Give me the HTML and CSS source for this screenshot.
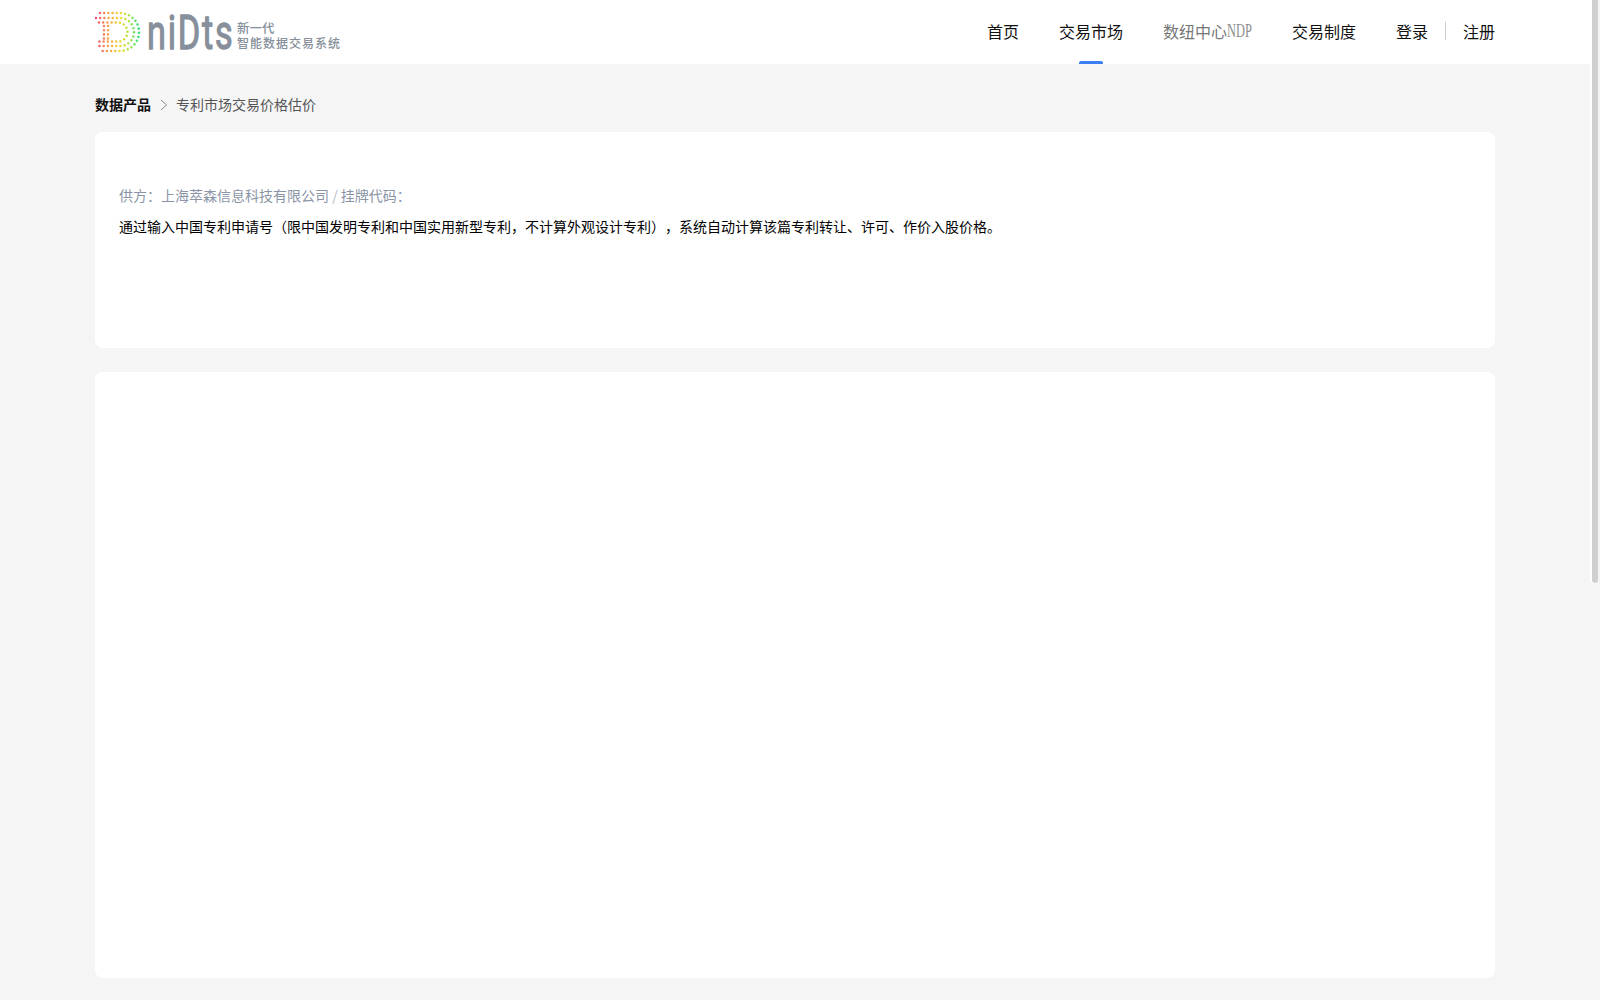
FILE: index.html
```html
<!DOCTYPE html>
<html lang="zh-CN">
<head>
<meta charset="utf-8">
<title>专利市场交易价格估价</title>
<link rel="stylesheet" href="styles.css">
</head>
<body>
<div class="viewport">
  <header class="header">
    <div class="header-inner">
      <svg class="logo" viewBox="95 0 250 64" width="250" height="64" role="img" aria-label="niDts 新一代智能数据交易系统">
        <defs>
          <linearGradient id="dg" gradientUnits="userSpaceOnUse" x1="95" y1="0" x2="140" y2="0">
            <stop offset="0" stop-color="#f4427c"/>
            <stop offset="0.28" stop-color="#f8a04c"/>
            <stop offset="0.55" stop-color="#f0dc3c"/>
            <stop offset="0.75" stop-color="#b4e444"/>
            <stop offset="0.95" stop-color="#3ee27c"/>
          </linearGradient>
        </defs>
        <g class="logo-dots" stroke="url(#dg)">
          <path d="M100 13H120A19 19 0 0 1 120 51H100"/>
          <path d="M96 18H120A14 14 0 0 1 120 46H96"/>
          <path d="M99 22.500H118A9.500 9.500 0 0 1 118 41.500H99"/>
          <path d="M104 26V40"/>
          <path d="M108 26V40"/>
        </g>
        <text class="logo-word" transform="translate(147 49) scale(0.7 1)">niDts</text>
        <text class="logo-cn logo-cn-top" x="237" y="33">新一代</text>
        <text class="logo-cn" x="237" y="48" textLength="103">智能数据交易系统</text>
      </svg>
      <nav class="nav">
        <a class="nav-item">首页</a>
        <a class="nav-item active">交易市场</a>
        <a class="nav-item muted">数纽中心<span class="ndp">NDP</span></a>
        <a class="nav-item">交易制度</a>
        <div class="auth">
          <a class="nav-item">登录</a>
          <span class="auth-sep"></span>
          <a class="nav-item">注册</a>
        </div>
      </nav>
    </div>
  </header>
  <main class="main">
    <div class="crumbs">
      <span class="crumb-root">数据产品</span>
      <svg class="crumb-sep" viewBox="0 0 10 12" width="10" height="12"><path d="M2 1L7.500 6L2 11"/></svg>
      <span class="crumb-current">专利市场交易价格估价</span>
    </div>
    <section class="card card-info">
      <p class="supplier">供方：上海萃森信息科技有限公司 <span class="slash">/</span> 挂牌代码：</p>
      <p class="desc">通过输入中国专利申请号（限中国发明专利和中国实用新型专利，不计算外观设计专利），系统自动计算该篇专利转让、许可、作价入股价格。</p>
    </section>
    <section class="card card-body"></section>
  </main>
  <div class="scroll-thumb"></div>
</div>
</body>
</html>
```
FILE: styles.css
```css
* { box-sizing: border-box; }
html, body { margin: 0; padding: 0; height: 100%; overflow: hidden; }
body {
  background: #f5f5f5;
  color: #000;
  font-family: "Noto Sans CJK SC", "Liberation Sans", sans-serif;
  text-spacing-trim: space-all;
}
.viewport {
  position: relative;
  height: 1000px;
  padding-right: 10px;
  background: #f5f5f5;
  overflow: hidden;
}
.scroll-thumb {
  position: absolute;
  top: 0;
  right: 2px;
  width: 6px;
  height: 583px;
  background: #d0d0d0;
  border-radius: 0 0 3px 3px;
  box-shadow: -2px 0 0 #fff, 0 2px 0 -1px #fff;
}
.header { background: #fff; height: 64px; }
.header-inner {
  width: 1400px;
  height: 64px;
  margin: 0 auto;
  display: flex;
  justify-content: space-between;
}
.logo { display: block; flex: none; }
.logo-dots path {
  fill: none;
  stroke-width: 2.600;
  stroke-linecap: round;
  stroke-dasharray: 0 4.200;
}
.logo-word {
  font-family: Roboto, sans-serif;
  font-size: 49px;
  letter-spacing: 2.500px;
  fill: #868f9b;
  stroke: #868f9b;
  stroke-width: 1.300px;
  stroke-linejoin: round;
}
.logo-cn {
  font-size: 12px;
  font-weight: 500;
  fill: #868f9b;
}
.logo-cn-top { font-size: 12.500px; }
.nav { display: flex; align-items: stretch; gap: 40px; }
.nav-item {
  position: relative;
  display: flex;
  align-items: center;
  height: 64px;
  padding-bottom: 2px;
  font-size: 16px;
  line-height: 24px;
  color: #111;
  white-space: nowrap;
}
.nav-item.muted { color: #777; }
.ndp {
  display: inline-block;
  margin-right: -11px;
  font-family: "Liberation Serif", serif;
  font-size: 18px;
  color: #8c8c8c;
  transform: scaleX(0.69);
  transform-origin: left center;
}
.nav-item.active::after {
  content: "";
  position: absolute;
  left: 50%;
  bottom: 0;
  width: 24px;
  height: 3px;
  margin-left: -12px;
  background: #3b7ff5;
  border-radius: 2px 2px 0 0;
}
.auth { display: flex; align-items: center; gap: 17px; }
.auth-sep { width: 1px; height: 18px; margin-top: -2px; background: #ccc; }
.main {
  width: 1400px;
  margin: 0 auto;
}
.crumbs {
  display: flex;
  align-items: center;
  height: 20px;
  margin: 30px 0 18px;
  font-size: 14px;
  line-height: 20px;
}
.crumb-root { font-weight: 700; color: #111; }
.crumb-sep { margin: 2px 7px 0 8px; flex: none; }
.crumb-sep path { fill: none; stroke: #8a8a8a; stroke-width: 1; }
.crumb-current { color: #555; }
.card { background: #fff; border-radius: 8px; }
.card-info { height: 216px; padding: 52px 24px 0; }
.card-body { height: 606px; margin-top: 24px; }
.supplier {
  margin: 0;
  font-size: 14px;
  line-height: 22px;
  color: #8a94a6;
}
.slash { color: #b6bcc6; }
.desc {
  margin: 9px 0 0;
  font-size: 14px;
  line-height: 22px;
  color: #000;
}
```
